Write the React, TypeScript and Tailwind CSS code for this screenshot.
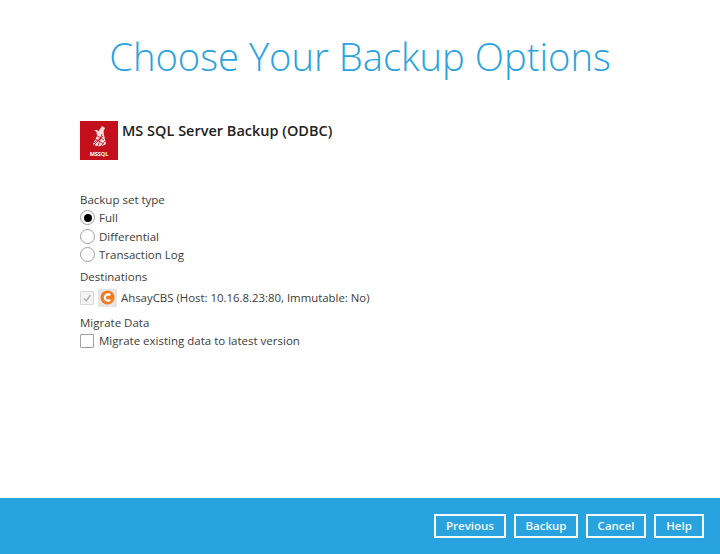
const Radio = ({ on, label }: { on?: boolean; label: string }) => (
  <div className="flex h-[18.5px] items-center">
    <span className="flex h-[15px] w-[15px] items-center justify-center rounded-full border border-[#a0a0a0] bg-white">
      {on && <span className="h-[8px] w-[8px] rounded-full bg-black" />}
    </span>
    <span className="ml-[4px]">{label}</span>
  </div>
);

const Btn = ({ w, label }: { w: string; label: string }) => (
  <button className={`h-[24px] border-2 border-[#f4fbff] pt-[1px] text-[11.5px] font-semibold text-[#f4fbff] ${w}`}>{label}</button>
);

export default function App() {
  return (
    <div className="flex h-[554px] w-[720px] flex-col overflow-hidden bg-white font-['Open_Sans','Noto_Sans',sans-serif] text-[11.5px] text-[#3c3c3c]">
      <main className="flex-1">
        <h1 className="mt-[31px] text-center text-[38.2px] leading-[50px] font-light text-[#29a3df]">Choose Your Backup Options</h1>
        <div className="ml-[80px] mt-[40px] flex">
          <div className="flex h-[39px] w-[38px] flex-col items-center justify-end bg-[#c4101c] pb-[3px]">
            <svg viewBox="0 0 20 26" className="mb-[2px] h-[26px] w-[20px]">
              <path d="M13 2 L16 4 L14.5 7.5 L15 11 L17 20 C13 23 7 23 4 20 L8 12 L7.5 8 L5 6 L8 6 L9.5 7.5 L11 5 Z" fill="#f6dcdc" />
              <path d="M6 15 L15 20 M5 19 L12 13 M9 22 L13 10 M7 11 L15 16 M5 21 L14 12 M12 22 L16 17" stroke="#c4101c" strokeWidth="0.8" fill="none" />
            </svg>
            <span className="text-[5.5px] leading-none font-bold text-white">MSSQL</span>
          </div>
          <div className="ml-[4px] -mt-[1px] text-[14.5px] leading-[21px] font-semibold text-[#222]">MS SQL Server Backup (ODBC)</div>
        </div>
        <section className="ml-[80px] mt-[31px]">
          <div className="h-[17.5px] leading-[18px]">Backup set type</div>
          <Radio on label="Full" />
          <Radio label="Differential" />
          <Radio label="Transaction Log" />
          <div className="mt-[3.5px] h-[18px] leading-[18px]">Destinations</div>
          <div className="mt-[3px] flex h-[18px] items-center">
            <span className="flex h-[14px] w-[14px] items-center justify-center rounded-[1px] border border-[#d8d8d8] bg-[#f4f4f4]">
              <svg viewBox="0 0 12 12" className="h-[10px] w-[10px]"><path d="M2 6.5 L5 9.5 L10 2.5" stroke="#a8a8a8" strokeWidth="1.5" fill="none" /></svg>
            </span>
            <span className="ml-[4px] flex h-[18px] w-[19px] items-center justify-center bg-[#e6e6e6]">
              <svg viewBox="0 0 16 16" className="h-[15px] w-[15px]">
                <circle cx="8" cy="8" r="7.5" fill="#f47b20" />
                <path d="M11 5.6 A3.4 3.4 0 1 0 11 10.4" stroke="white" strokeWidth="2.4" fill="none" />
              </svg>
            </span>
            <span className="ml-[4px] text-[11.4px]">AhsayCBS (Host: 10.16.8.23:80, Immutable: No)</span>
          </div>
          <div className="mt-[7px] h-[18px] leading-[18px]">Migrate Data</div>
          <div className="flex h-[18px] items-center">
            <span className="h-[14px] w-[14px] rounded-[1px] border border-[#a0a0a0] bg-white" />
            <span className="ml-[5px]">Migrate existing data to latest version</span>
          </div>
        </section>
      </main>
      <footer className="flex h-[56px] items-center justify-end gap-[8px] bg-[#29a3df] pr-[16px] pb-[1px]">
        <Btn w="w-[72px]" label="Previous" />
        <Btn w="w-[64px]" label="Backup" />
        <Btn w="w-[60px]" label="Cancel" />
        <Btn w="w-[50px]" label="Help" />
      </footer>
    </div>
  );
}
